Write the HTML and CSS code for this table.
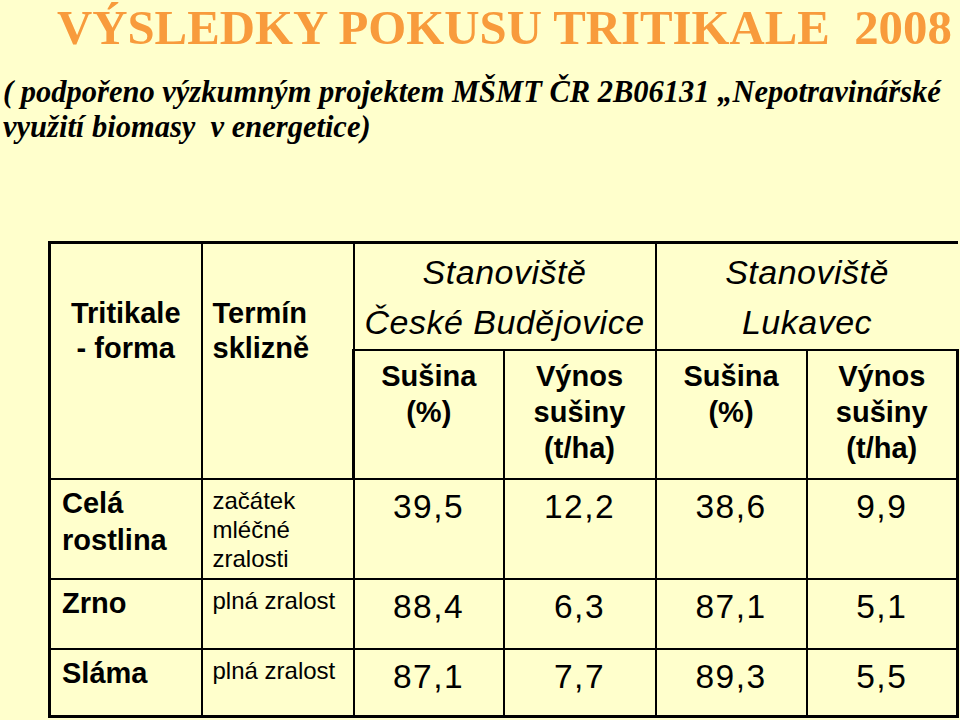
FILE: index.html
```html
<!DOCTYPE html>
<html lang="cs">
<head>
<meta charset="utf-8">
<title>Výsledky pokusu tritikale 2008</title>
<link rel="stylesheet" href="styles.css">
</head>
<body>
<main class="slide">
  <h1 class="title">VÝSLEDKY POKUSU TRITIKALE&nbsp; 2008</h1>
  <p class="subtitle">( podpořeno výzkumným projektem MŠMT ČR 2B06131 „Nepotravinářské<br>využití biomasy&nbsp; v energetice)</p>
  <table class="results">
    <colgroup>
      <col class="c-form">
      <col class="c-term">
      <col class="c-a">
      <col class="c-b">
      <col class="c-c">
      <col class="c-d">
    </colgroup>
    <thead>
      <tr class="row-site">
        <th rowspan="2" class="form">Tritikale<br>- forma</th>
        <th rowspan="2" class="term">Termín<br>sklizně</th>
        <th colspan="2" class="site">Stanoviště<br>České Budějovice</th>
        <th colspan="2" class="site site-open">Stanoviště<br>Lukavec</th>
      </tr>
      <tr class="row-sub">
        <th class="sub">Sušina<br>(%)</th>
        <th class="sub">Výnos<br>sušiny<br>(t/ha)</th>
        <th class="sub">Sušina<br>(%)</th>
        <th class="sub">Výnos<br>sušiny<br>(t/ha)</th>
      </tr>
    </thead>
    <tbody>
      <tr class="row-a">
        <th class="kind">Celá<br>rostlina</th>
        <td class="when">začátek<br>mléčné<br>zralosti</td>
        <td class="num">39,5</td>
        <td class="num">12,2</td>
        <td class="num">38,6</td>
        <td class="num">9,9</td>
      </tr>
      <tr class="row-b">
        <th class="kind">Zrno</th>
        <td class="when">plná zralost</td>
        <td class="num">88,4</td>
        <td class="num">6,3</td>
        <td class="num">87,1</td>
        <td class="num">5,1</td>
      </tr>
      <tr class="row-c">
        <th class="kind">Sláma</th>
        <td class="when">plná zralost</td>
        <td class="num">87,1</td>
        <td class="num">7,7</td>
        <td class="num">89,3</td>
        <td class="num">5,5</td>
      </tr>
    </tbody>
  </table>
</main>
</body>
</html>
```
FILE: styles.css
```css
html, body {
  margin: 0;
  padding: 0;
  background: #ffffcc;
}

.slide {
  width: 960px;
  height: 720px;
  overflow: hidden;
  color: #000;
}

.title {
  margin: 0;
  padding-left: 57px;
  font-family: "Liberation Serif", "Times New Roman", serif;
  font-weight: bold;
  font-size: 48.8px;
  line-height: 56px;
  color: #f89b3c;
  white-space: nowrap;
}

.subtitle {
  margin: 19px 0 0 0;
  padding-left: 3px;
  font-family: "Liberation Serif", "Times New Roman", serif;
  font-weight: bold;
  font-style: italic;
  font-size: 30.5px;
  line-height: 35px;
  white-space: nowrap;
}

.results {
  margin: 96px 0 0 48px;
  border-collapse: collapse;
  table-layout: fixed;
  width: 908px;
  font-family: "Liberation Sans", Arial, sans-serif;
}

.c-form { width: 152px; }
.c-term { width: 152px; }
.c-a { width: 150px; }
.c-b { width: 152px; }
.c-c { width: 151px; }
.c-d { width: 151px; }

.results th,
.results td {
  border: 2px solid #000;
  padding: 0;
  vertical-align: top;
}

.results .row-site th { border-top-width: 3px; }
.results tr > :first-child { border-left-width: 3px; }
.results tr > :last-child { border-right-width: 3px; }
.results .row-c th, .results .row-c td { border-bottom-width: 3px; }
.results .site-open { border-right: none; }

.row-site { height: 107px; }
.row-sub { height: 129px; }
.row-a { height: 100px; }
.row-b { height: 70px; }
.row-c { height: 68px; }

.results .form,
.results .term,
.results .sub,
.results .kind {
  font-weight: bold;
  font-size: 29px;
}

.results .form {
  text-align: center;
  line-height: 35px;
  padding-top: 52px;
}

.results .term {
  text-align: left;
  line-height: 35px;
  padding: 52px 0 0 10px;
}

.results .site {
  font-weight: normal;
  font-style: italic;
  font-size: 34px;
  line-height: 50px;
  letter-spacing: 0.5px;
  text-align: center;
  padding-top: 3px;
}

.results .sub {
  text-align: center;
  line-height: 36px;
  padding-top: 7px;
}

.results .kind {
  text-align: left;
  line-height: 37px;
  padding: 5px 0 0 11px;
}

.results .when {
  font-size: 24px;
  line-height: 29px;
  padding: 6px 0 0 10px;
}

.results .num {
  font-size: 33.5px;
  line-height: 44px;
  letter-spacing: 1.5px;
  text-align: center;
  padding-top: 5px;
}
```
